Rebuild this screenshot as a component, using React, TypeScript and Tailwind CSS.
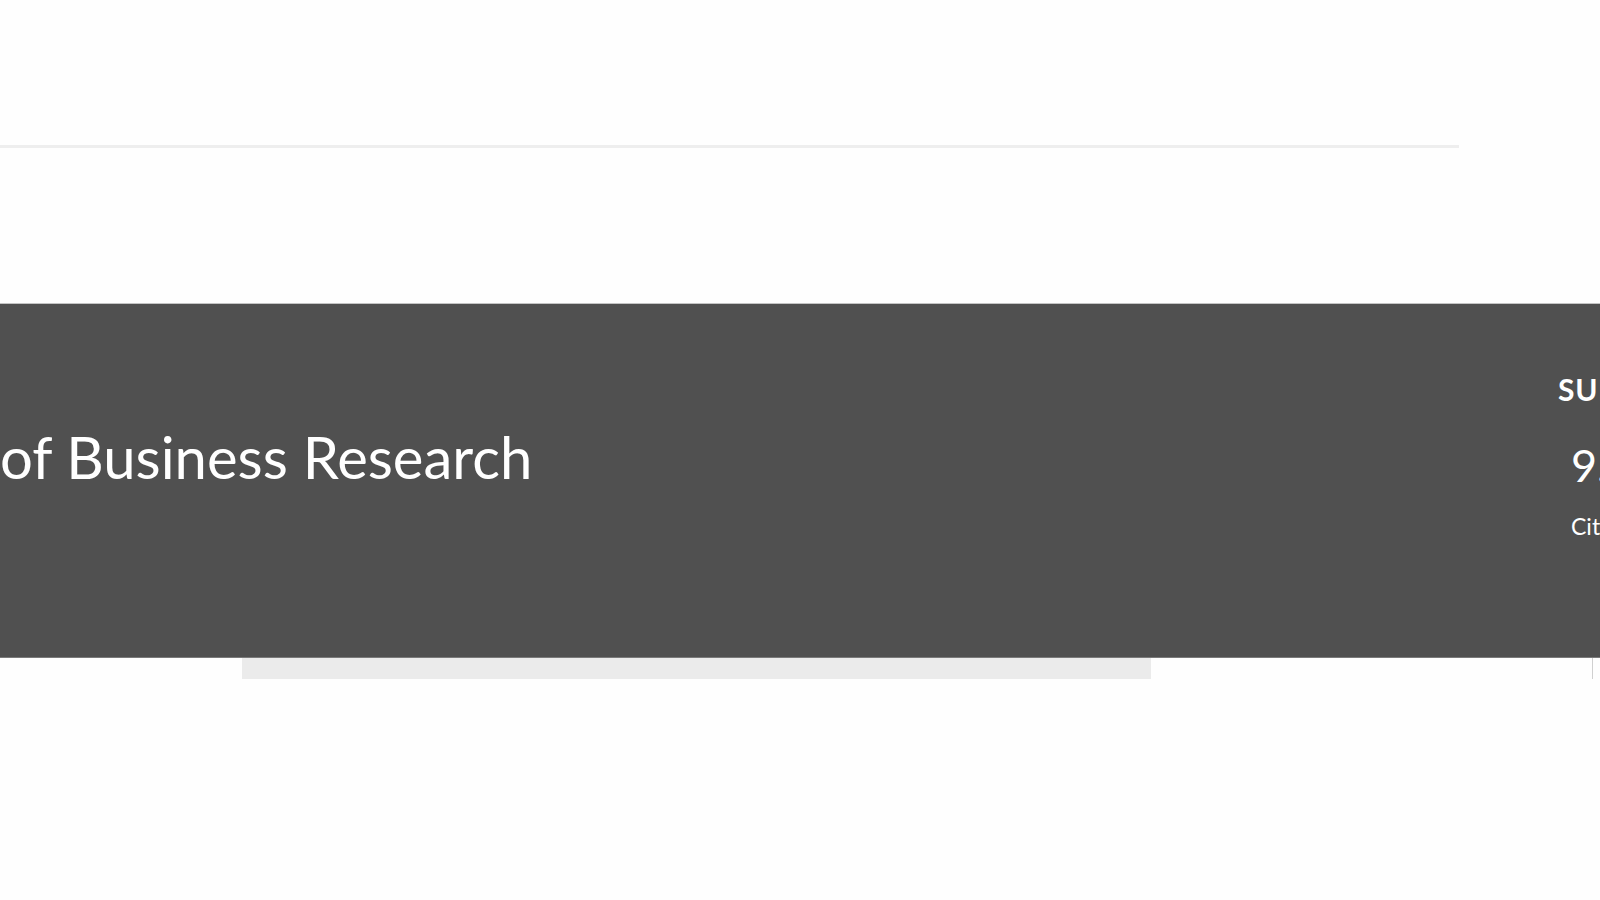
import React from 'react';

export default function App() {
  return (
    <div className="w-[1600px] h-[900px] overflow-hidden bg-[#fefefe] font-['Lato',sans-serif]">
      {/* top rule */}
      <div className="pt-[145px]">
        <div className="w-[1459px] h-[3px] bg-[#eeeeee]" />
      </div>

      {/* journal banner */}
      <div className="mt-[155px] h-[355px] bg-[#505050] border-t border-t-[#c4c4c4] border-b border-b-[#7a7a7a] flex">
        <div className="w-[1558px] shrink-0 pt-[124px]">
          <h1 className="text-[58px] leading-none text-white whitespace-nowrap">of Business Research</h1>
        </div>
        <div className="shrink-0 pt-[70px] text-white whitespace-nowrap">
          <div className="text-[30px] font-bold leading-none tracking-wide">SUPPORTS OPEN ACCESS</div>
          <div className="mt-[39px] pl-[13px] text-[45px] leading-none">9.8</div>
          <div className="mt-[27px] pl-[13px] text-[23px] leading-none">CiteScore</div>
        </div>
      </div>

      {/* tabs strip below banner */}
      <div className="flex h-[21px]">
        <div className="ml-[242px] w-[909px] h-full bg-[#ebebeb]" />
        <div className="ml-[441px] w-px h-full bg-[#d0d0d0]" />
      </div>
    </div>
  );
}
